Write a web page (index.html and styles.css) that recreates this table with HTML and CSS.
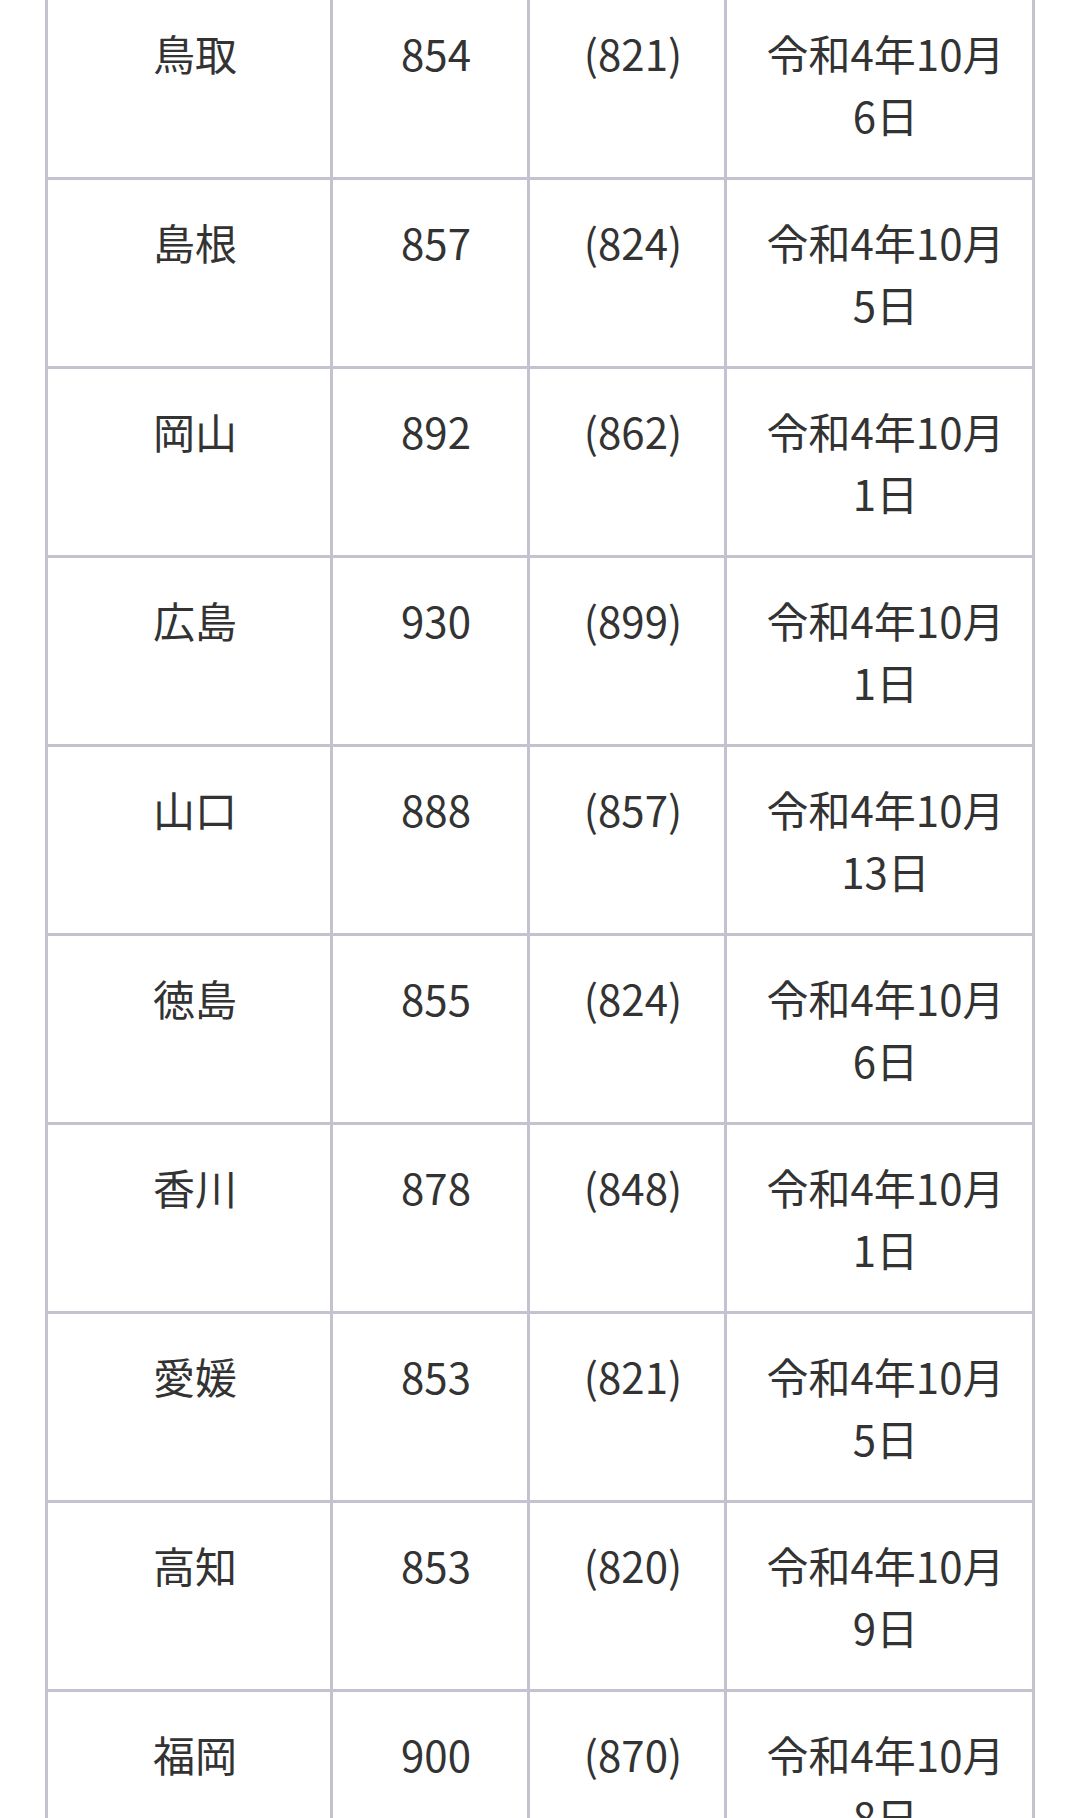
FILE: index.html
```html
<!DOCTYPE html>
<html lang="ja">
<head>
<meta charset="utf-8">
<link rel="stylesheet" href="styles.css">
<title>最低賃金</title>
</head>
<body>
<div class="wage-table">
  <div class="cell">鳥取</div><div class="cell">854</div><div class="cell">(821)</div><div class="cell">令和4年10月<br>6日</div>
  <div class="cell">島根</div><div class="cell">857</div><div class="cell">(824)</div><div class="cell">令和4年10月<br>5日</div>
  <div class="cell">岡山</div><div class="cell">892</div><div class="cell">(862)</div><div class="cell">令和4年10月<br>1日</div>
  <div class="cell">広島</div><div class="cell">930</div><div class="cell">(899)</div><div class="cell">令和4年10月<br>1日</div>
  <div class="cell">山口</div><div class="cell">888</div><div class="cell">(857)</div><div class="cell">令和4年10月<br>13日</div>
  <div class="cell">徳島</div><div class="cell">855</div><div class="cell">(824)</div><div class="cell">令和4年10月<br>6日</div>
  <div class="cell">香川</div><div class="cell">878</div><div class="cell">(848)</div><div class="cell">令和4年10月<br>1日</div>
  <div class="cell">愛媛</div><div class="cell">853</div><div class="cell">(821)</div><div class="cell">令和4年10月<br>5日</div>
  <div class="cell">高知</div><div class="cell">853</div><div class="cell">(820)</div><div class="cell">令和4年10月<br>9日</div>
  <div class="cell">福岡</div><div class="cell">900</div><div class="cell">(870)</div><div class="cell">令和4年10月<br>8日</div>
</div>
</body>
</html>
```

FILE: styles.css
```css
html, body {
  margin: 0;
  padding: 0;
  background: #ffffff;
}

body {
  font-family: "Noto Sans CJK JP", "Noto Sans", sans-serif;
  color: #333333;
}

.wage-table {
  display: grid;
  grid-template-columns: 282px 194px 194px 305px;
  gap: 3px;
  padding: 3px;
  width: 984px;
  margin: -12px 0 0 45px;
  background: #c3c3cf;
}

.cell {
  background: #ffffff;
  padding: 30.5px 17px 30.5px 29px;
  font-size: 42px;
  line-height: 62.5px;
  text-align: center;
}
```
